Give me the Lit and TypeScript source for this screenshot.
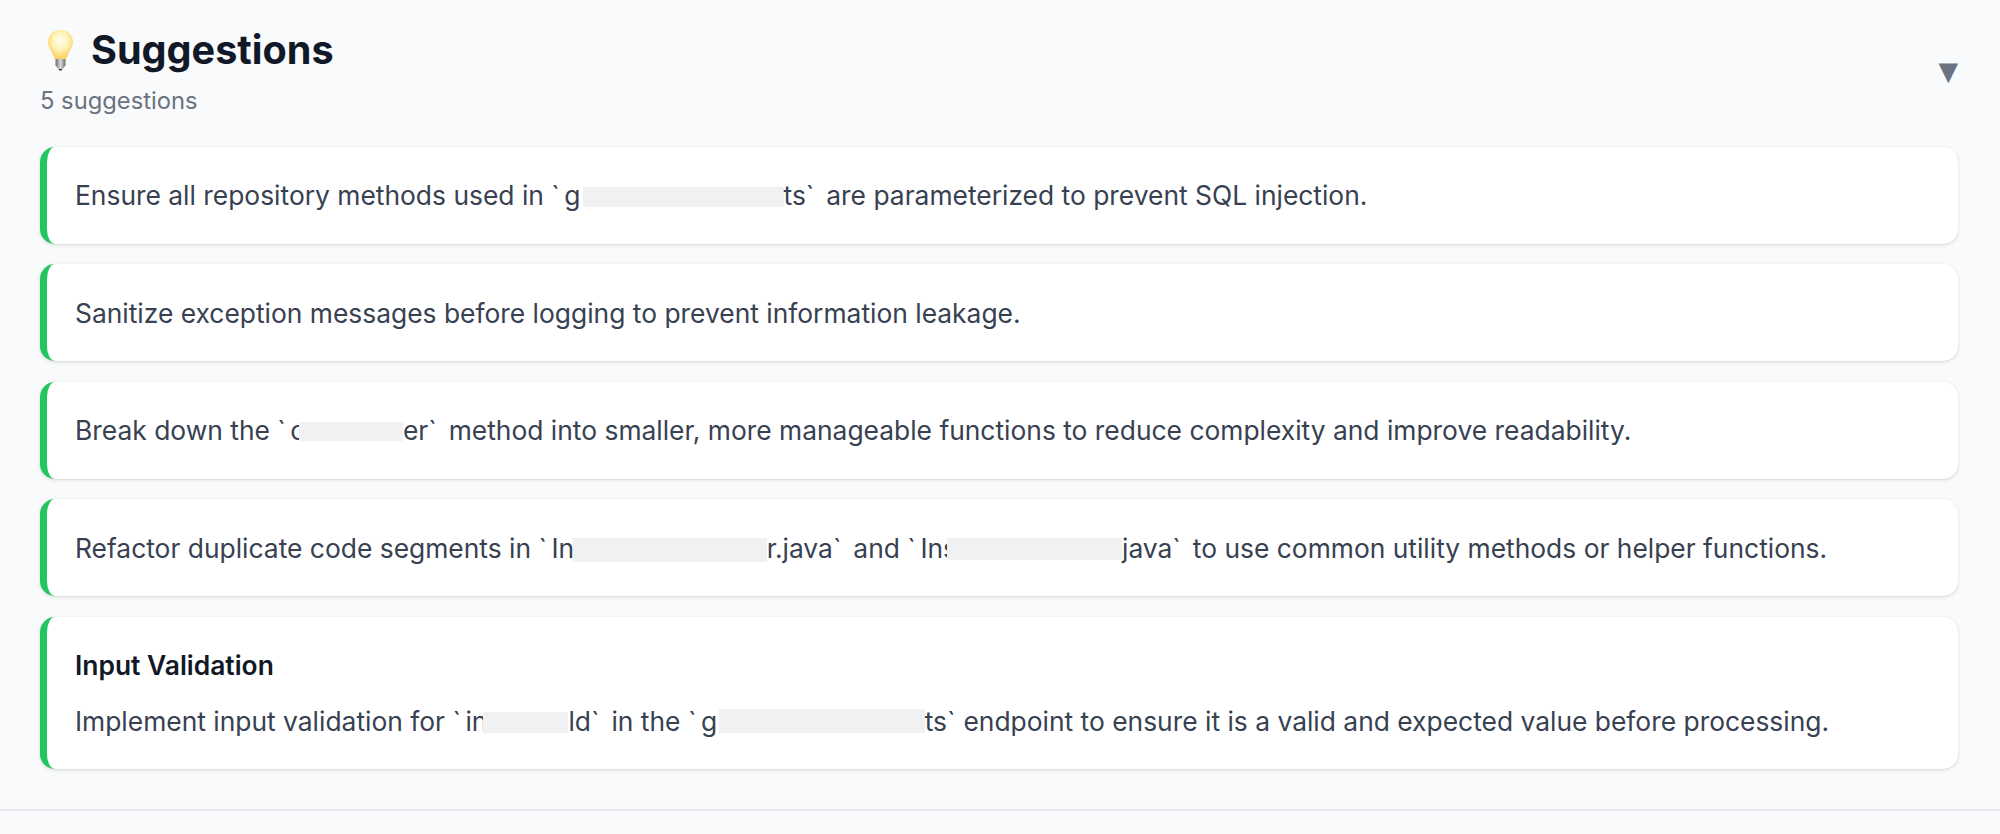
import { LitElement, html, css } from "lit";
import { customElement } from "lit/decorators.js";

const patch = (w: number, h: number, drop: number, lead: number) =>
  html`<span
    class="redact"
    style="width:${w}px;height:${h}px;vertical-align:${-drop}px;margin-left:${lead}px"
  ></span>`;
const tick = html`<span class="tick">\`</span>`;
const tightTick = html`<span class="tick tight">\`</span>`;

@customElement("app-root")
export class AppRoot extends LitElement {
  static styles = css`
    :host {
      display: block;
      height: 834px;
      overflow: hidden;
      background: #f9fafb;
      font-family: Inter, "Liberation Sans", sans-serif;
      box-sizing: border-box;
    }
    .section {
      padding: 25px 42px 40px 40px;
      border-bottom: 2px solid #e5e7eb;
    }
    .head {
      display: flex;
      justify-content: space-between;
      align-items: center;
      margin-bottom: 30.7px;
    }
    .title {
      display: flex;
      align-items: center;
      gap: 13px;
      margin: 0 0 11px;
      font-size: 39.6px;
      line-height: 50px;
      font-weight: 700;
      color: #111827;
    }
    .bulb {
      width: 38px;
      height: 42px;
      flex: none;
    }
    .sub {
      font-size: 23.76px;
      line-height: 30px;
      color: #6b7280;
    }
    .toggle {
      font-family: "DejaVu Sans", sans-serif;
      font-size: 25.5px;
      line-height: 28px;
      color: #6b7280;
    }
    .list {
      display: flex;
      flex-direction: column;
      gap: 20.5px;
    }
    .card {
      background: #fff;
      border-left: 7px solid #22c55e;
      border-radius: 15px;
      padding: 27.4px 28px;
      box-shadow: 0 1px 4px rgba(0, 0, 0, 0.1), 0 1px 2px rgba(0, 0, 0, 0.06);
      font-size: 26.4px;
      line-height: 42.24px;
      color: #374151;
    }
    .card-title {
      font-size: 26.4px;
      line-height: 42.24px;
      font-weight: 600;
      color: #111827;
      margin-bottom: 13.2px;
    }
    .tick {
      margin-right: 4.5px;
    }
    .tick.tight {
      margin-right: 0.5px;
    }
    .redact {
      display: inline-block;
      background: #f0f1f3;
    }
  `;

  render() {
    return html`
      <section class="section">
        <header class="head">
          <div>
            <h2 class="title">
              <svg class="bulb" viewBox="-1.5 0 38 42" aria-hidden="true">
                <defs>
                  <radialGradient id="glass" cx="50%" cy="38%" r="55%">
                    <stop offset="0" stop-color="#fffef2" />
                    <stop offset="0.55" stop-color="#fff3b8" />
                    <stop offset="1" stop-color="#fbd568" />
                  </radialGradient>
                  <linearGradient id="base" x1="0" x2="1" y1="0" y2="0">
                    <stop offset="0" stop-color="#6e6e6e" />
                    <stop offset="0.5" stop-color="#d8d8d8" />
                    <stop offset="1" stop-color="#707070" />
                  </linearGradient>
                </defs>
                <path
                  d="M19 1C11.5 1 6.5 6.6 6.5 13c0 6.2 4.4 9.4 6 15.6.3 1 .6 1.4 1.6 1.4h9.8c1 0 1.3-.4 1.6-1.4 1.6-6.2 6-9.4 6-15.6C31.5 6.6 26.5 1 19 1Z"
                  fill="url(#glass)"
                />
                <path d="M14 30h10v6.5l-3 3.5h-4l-3-3.5Z" fill="url(#base)" />
                <path d="M17 40h4l-.8 1.6h-2.4Z" fill="#3d3d3d" />
              </svg>
              Suggestions
            </h2>
            <div class="sub">5 suggestions</div>
          </div>
          <span class="toggle">▼</span>
        </header>
        <div class="list">
          <article class="card">
            Ensure all repository methods used in ${tick}g${patch(201, 20, 2, 2)}ts${tick} are parameterized to prevent SQL injection.
          </article>
          <article class="card">
            Sanitize exception messages before logging to prevent information leakage.
          </article>
          <article class="card">
            Break down the ${tick}c${patch(104, 19, 1, -6.5)}er${tick} method into smaller, more manageable functions to reduce complexity and improve readability.
          </article>
          <article class="card">
            Refactor duplicate code segments in ${tick}In${patch(194, 24, 4, -1.5)}r.java${tick} and ${tick}Ins${patch(175, 22, 2, -10)}java${tick} to use common utility methods or helper functions.
          </article>
          <article class="card">
            <div class="card-title">Input Validation</div>
            Implement input validation for ${tick}in${patch(85, 21, 2, -4)}ld${tick} in the ${tick}g${patch(206, 24, 2, 1.5)}ts${tightTick} endpoint to ensure it is a valid and expected value before processing.
          </article>
        </div>
      </section>
    `;
  }
}
